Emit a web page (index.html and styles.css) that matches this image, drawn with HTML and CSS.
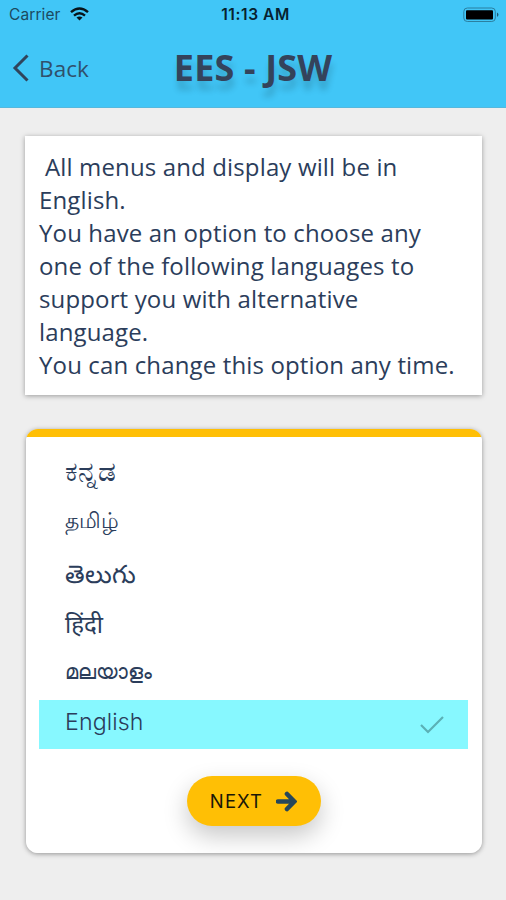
FILE: index.html
```html
<!DOCTYPE html>
<html lang="en">
<head>
<meta charset="utf-8">
<title>EES - JSW</title>
<link rel="stylesheet" href="styles.css">
</head>
<body>
<header class="top">
  <div class="status">
    <div class="carrier"><span>Carrier</span>
      <svg width="19" height="14" viewBox="0 0 19 14"><g fill="none" stroke="#07141b" stroke-width="2.4"><path d="M1 5.2Q9.500-2.400 18 5.200"/><path d="M4 8.600Q9.500 3.800 15 8.600"/></g><path d="M6.500 10.600Q9.500 8.200 12.500 10.600L9.500 13.600Z" fill="#07141b"/></svg>
    </div>
    <div class="time">11:13 AM</div>
    <svg class="battery" width="37" height="16" viewBox="0 0 37 16"><rect x=".8" y="1" width="31.500" height="13.500" rx="3.500" fill="none" stroke="#2b7fa0" stroke-width="1"/><rect x="3" y="3.200" width="27" height="9.200" rx="1" fill="#000"/><path d="M34 5.500Q37 7.700 34 10Z" fill="#1d5a75"/></svg>
  </div>
  <nav class="nav">
    <div class="back"><svg width="18" height="28" viewBox="0 0 18 28"><path d="M15.500 1.500 3 14l12.500 12.500" fill="none" stroke="#30445c" stroke-width="3"/></svg><span>Back</span></div>
    <h1>EES - JSW</h1>
  </nav>
</header>
<main>
  <section class="info">
    <p class="first">All menus and display will be in<br>English.</p>
    <p>You have an option to choose any<br>one of the following languages to<br>support you with alternative<br>language.</p>
    <p>You can change this option any time.</p>
  </section>
  <section class="card">
    <ul>
      <li class="kn"><span lang="kn">ಕನ್ನಡ</span></li>
      <li class="ta"><span lang="ta">தமிழ்</span></li>
      <li class="te"><span lang="te">తెలుగు</span></li>
      <li class="hi"><span lang="hi">हिंदी</span></li>
      <li class="ml"><span lang="ml">മലയാളം</span></li>
      <li class="selected"><span>English</span><svg width="24" height="19" viewBox="0 0 24 19"><path d="M1 10 8 17 23 2" fill="none" stroke="#5bb0b6" stroke-width="2.200"/></svg></li>
    </ul>
    <button class="next"><span>NEXT</span><svg width="21" height="21" viewBox="0 0 21 21"><path d="M2 10.500H18M11 3 18.300 10.500 11 18" fill="none" stroke="#26475a" stroke-width="4.600" stroke-linecap="round"/></svg></button>
  </section>
</main>
</body>
</html>
```
FILE: styles.css
```css
* { box-sizing: border-box; }
body { margin: 0; height: 900px; background: #eee; color: #2b3d5b; font-family: "Open Sans", "Noto Sans", sans-serif; overflow: hidden; }
.top { height: 108px; background: #41c6f7; border-bottom: 1px solid #55b8dd; }
.status { height: 29px; display: grid; grid-template-columns: 1fr auto 1fr; align-items: center; padding: 0 6px 0 9px; font-family: Inter, sans-serif; font-size: 15.500px; color: #1c4a60; }
.carrier { display: flex; align-items: center; gap: 9px; letter-spacing: .1px; }
.carrier svg { margin-top: -2px; }
.time { font-size: 15.500px; font-weight: 600; color: #07222f; letter-spacing: .6px; padding-left: 2px; }
.battery { justify-self: end; }
.nav { height: 78px; display: grid; grid-template-columns: 1fr auto 1fr; align-items: center; padding: 0 12px; }
.back { display: flex; align-items: center; gap: 9px; font-size: 22.500px; letter-spacing: .1px; color: #30506b; }
h1 { margin: 0; font-size: 36px; line-height: 50px; font-weight: 700; letter-spacing: .15px; color: #34435b; text-shadow: 1px 9px 6px rgba(0,0,0,.16); }
main { padding: 28px 24px 0 25px; }
.info { height: 259px; background: #fff; padding: 13.500px 14px; box-shadow: 0 1px 5px rgba(0,0,0,.35); font-size: 24px; letter-spacing: .14px; line-height: 33px; white-space: nowrap; }
.info p { margin: 0; }
.info .first { text-indent: 6px; }
.card { height: 424px; margin: 34px 0 0 1px; background: linear-gradient(#ffbf05 8px, #fff 8px); border-radius: 12px; box-shadow: 0 1px 5px rgba(0,0,0,.38); padding: 20px 14px 0 13px; display: flex; flex-direction: column; align-items: center; overflow: hidden; }
ul { list-style: none; margin: 0; padding: 0; width: 100%; }
li { height: 49px; padding: 0 24px 6px 26px; display: flex; align-items: center; justify-content: space-between; }
li span { line-height: 43px; }
.kn { font-size: 28px; }
.ta { font-size: 22px; }
.te { height: 55px; padding-bottom: 3px; font-size: 25.200px; }
.hi { font-size: 24px; }
.ml { padding-bottom: 8px; font-size: 21px; }
.selected { padding-bottom: 0; background: #87f8ff; font: 300 23.200px Inter, sans-serif; }
.selected span { padding-bottom: 5px; letter-spacing: .1px; }
.next { flex-shrink: 0; margin-top: 27px; width: 134px; height: 50px; padding: 0; border: 0; border-radius: 25px; background: #ffbf05; display: flex; align-items: center; justify-content: center; gap: 13px; font: 400 18.500px Inter, sans-serif; letter-spacing: 1.100px; color: #1a1708; box-shadow: 0 10px 24px rgba(0,0,0,.22); }
```
